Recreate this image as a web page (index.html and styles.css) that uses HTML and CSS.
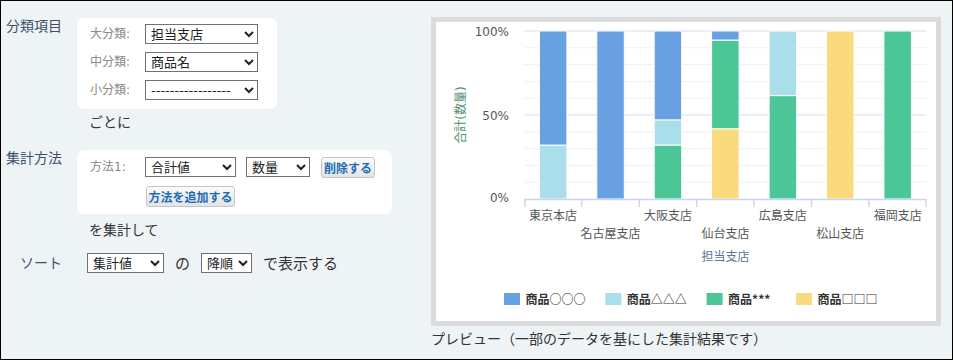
FILE: index.html
```html
<!DOCTYPE html>
<html lang="ja">
<head>
<meta charset="utf-8">
<title>集計</title>
<link rel="stylesheet" href="styles.css">
</head>
<body>
<div class="frame">
  <div class="form">
    <div class="row">
      <div class="label">分類項目</div>
      <div class="content">
        <div class="panel panel-class">
          <div class="field"><span class="flabel">大分類:</span><select class="sel sel-class"><option>担当支店</option></select></div>
          <div class="field"><span class="flabel">中分類:</span><select class="sel sel-class"><option>商品名</option></select></div>
          <div class="field"><span class="flabel">小分類:</span><select class="sel sel-class"><option>-----------------</option></select></div>
        </div>
        <div class="after after-class">ごとに</div>
      </div>
    </div>
    <div class="row row-method">
      <div class="label">集計方法</div>
      <div class="content">
        <div class="panel panel-method">
          <div class="field">
            <span class="flabel">方法1:</span>
            <select class="sel sel-func"><option>合計値</option></select>
            <select class="sel sel-target"><option>数量</option></select>
            <button class="btn btn-del" type="button">削除する</button>
          </div>
          <div class="field field-add">
            <button class="btn btn-add" type="button">方法を追加する</button>
          </div>
        </div>
        <div class="after after-method">を集計して</div>
      </div>
    </div>
    <div class="row row-sort">
      <div class="label label-sort">ソート</div>
      <div class="content sort-line">
        <select class="sel sel-sort"><option>集計値</option></select>
        <span class="word">の</span>
        <select class="sel sel-order"><option>降順</option></select>
        <span class="word">で表示する</span>
      </div>
    </div>
  </div>

  <div class="chartcol">
    <div class="chartbox">
      <svg class="chart" width="500" height="299" viewBox="0 0 500 299" xmlns="http://www.w3.org/2000/svg">
        <g class="grid" stroke="#f0f0f0" stroke-width="1">
          <line x1="88.4" x2="490.4" y1="25.8" y2="25.8"/>
          <line x1="88.4" x2="490.4" y1="42.6" y2="42.6"/>
          <line x1="88.4" x2="490.4" y1="59.4" y2="59.4"/>
          <line x1="88.4" x2="490.4" y1="76.2" y2="76.2"/>
          <line x1="88.4" x2="490.4" y1="109.8" y2="109.8"/>
          <line x1="88.4" x2="490.4" y1="126.6" y2="126.6"/>
          <line x1="88.4" x2="490.4" y1="143.4" y2="143.4"/>
          <line x1="88.4" x2="490.4" y1="160.2" y2="160.2"/>
        </g>
        <g stroke="#e4e9f1" stroke-width="1.5">
          <line x1="88.4" x2="490.4" y1="9" y2="9"/>
          <line x1="88.4" x2="490.4" y1="93" y2="93"/>
        </g>
        <g stroke="#fff" stroke-width="1">
          <rect x="103.4" y="9" width="27.5" height="114.24" fill="#68a0e1"/>
          <rect x="103.4" y="123.24" width="27.5" height="53.76" fill="#aadeea"/>

          <rect x="160.8" y="9" width="27.5" height="168" fill="#68a0e1"/>

          <rect x="218.2" y="9" width="27.5" height="89.04" fill="#68a0e1"/>
          <rect x="218.2" y="98.04" width="27.5" height="25.2" fill="#aadeea"/>
          <rect x="218.2" y="123.24" width="27.5" height="53.76" fill="#4cc597"/>

          <rect x="275.6" y="9" width="27.5" height="9.24" fill="#68a0e1"/>
          <rect x="275.6" y="18.24" width="27.5" height="88.7" fill="#4cc597"/>
          <rect x="275.6" y="106.94" width="27.5" height="70.06" fill="#f9da7c"/>

          <rect x="333.1" y="9" width="27.5" height="64.68" fill="#aadeea"/>
          <rect x="333.1" y="73.68" width="27.5" height="103.32" fill="#4cc597"/>

          <rect x="390.5" y="9" width="27.5" height="168" fill="#f9da7c"/>

          <rect x="447.9" y="9" width="27.5" height="168" fill="#4cc597"/>
        </g>
        <g stroke="#ccd6eb" stroke-width="1.5">
          <line x1="88.4" x2="490.4" y1="177.5" y2="177.5"/>
          <line x1="88.9" x2="88.9" y1="177" y2="185"/>
          <line x1="145.8" x2="145.8" y1="177" y2="185"/>
          <line x1="203.3" x2="203.3" y1="177" y2="185"/>
          <line x1="260.7" x2="260.7" y1="177" y2="185"/>
          <line x1="318.1" x2="318.1" y1="177" y2="185"/>
          <line x1="375.6" x2="375.6" y1="177" y2="185"/>
          <line x1="433.0" x2="433.0" y1="177" y2="185"/>
          <line x1="489.9" x2="489.9" y1="177" y2="185"/>
        </g>
        <g class="ylab" text-anchor="end">
          <text x="73" y="14.4">100%</text>
          <text x="73" y="98">50%</text>
          <text x="73" y="180.4">0%</text>
        </g>
        <text class="ytitle" transform="translate(25 93) rotate(-90)" text-anchor="middle" dominant-baseline="central">合計(数量)</text>
        <g class="xlab" text-anchor="middle">
          <text x="117.1" y="197.5">東京本店</text>
          <text x="174.5" y="216">名古屋支店</text>
          <text x="232.0" y="197.5">大阪支店</text>
          <text x="289.4" y="216">仙台支店</text>
          <text x="346.8" y="197.5">広島支店</text>
          <text x="404.2" y="216">松山支店</text>
          <text x="461.7" y="197.5">福岡支店</text>
        </g>
        <text class="xtitle" x="289.4" y="238.5" text-anchor="middle">担当支店</text>
        <g class="legend">
          <rect x="68" y="271" width="16" height="12" fill="#68a0e1"/>
          <text x="89.5" y="281.5">商品○○○</text>
          <rect x="169.3" y="271" width="16" height="12" fill="#aadeea"/>
          <text x="190.8" y="281.5">商品△△△</text>
          <rect x="270.6" y="271" width="16" height="12" fill="#4cc597"/>
          <text x="292.1" y="281.5">商品***</text>
          <rect x="360" y="271" width="16" height="12" fill="#f9da7c"/>
          <text x="381.5" y="281.5">商品□□□</text>
        </g>
      </svg>
    </div>
    <div class="caption">プレビュー（一部のデータを基にした集計結果です）</div>
  </div>
</div>
</body>
</html>
```

FILE: styles.css
```css
html, body {
  margin: 0;
  padding: 0;
}

body {
  font-family: "DejaVu Sans", "Noto Sans CJK JP", sans-serif;
  color: #333;
  background: #eef3f6;
}

.frame {
  box-sizing: border-box;
  width: 953px;
  height: 360px;
  border: 1px solid #000;
  background: #eef3f6;
  display: flex;
  align-items: flex-start;
}

.form {
  width: 430px;
  flex: none;
  padding-top: 17px;
  display: flex;
  flex-direction: column;
}

.row {
  display: flex;
  align-items: flex-start;
}

.row-method {
  margin-top: 19px;
}

.row-sort {
  margin-top: 14px;
}

.label {
  width: 71px;
  padding-left: 5px;
  flex: none;
  font-size: 14px;
  line-height: 18px;
  margin-top: -2px;
  color: #3d5068;
  font-family: "Noto Sans CJK JP", sans-serif;
}

.label-sort {
  width: 57px;
  padding-left: 19px;
  margin-top: 0;
  color: #3d5068;
}

.content {
  display: flex;
  flex-direction: column;
  align-items: flex-start;
}

.panel {
  background: #fff;
  border-radius: 7px;
  display: flex;
  flex-direction: column;
  gap: 8px;
}

.panel-class {
  width: 168px;
  padding: 6px 19px 9px 13px;
}

.panel-method {
  width: 286px;
  padding: 7px 16px 7px 13px;
}

.field {
  display: flex;
  align-items: flex-start;
  height: 21px;
}

.panel-class .field {
  height: 20px;
}

.flabel {
  width: 55px;
  flex: none;
  font-size: 12px;
  line-height: 20px;
  color: #888;
}

.sel {
  box-sizing: border-box;
  height: 20px;
  margin: 0;
  padding: 0 0 0 1px;
  font-family: "DejaVu Sans", "Noto Sans CJK JP", sans-serif;
  font-size: 13px;
  color: #222;
  background-color: #fff;
  border: 1px solid #707070;
  border-radius: 0;
  flex: none;
}

.sel-class {
  width: 113px;
}

.sel-func {
  width: 91px;
}

.sel-target {
  width: 64px;
  margin-left: 10px;
}

.btn {
  box-sizing: border-box;
  height: 21px;
  margin: 0;
  padding: 0;
  font-family: "Noto Sans CJK JP", sans-serif;
  font-size: 12px;
  font-weight: bold;
  line-height: 19px;
  color: #1d6cb4;
  background: linear-gradient(#fbfbfb, #e4e4e4);
  border: 1px solid #c6c6c6;
  border-radius: 3px;
  flex: none;
}

.btn-del {
  width: 54px;
  margin-left: 11px;
}

.field-add {
  padding-left: 56px;
}

.btn-add {
  width: 89px;
}

.after {
  margin-left: 12px;
  font-size: 14px;
  line-height: 20px;
  color: #333;
  font-family: "Noto Sans CJK JP", sans-serif;
}

.after-class {
  margin-top: 2px;
}

.after-method {
  margin-top: 5px;
}

.sort-line {
  flex-direction: row;
  align-items: center;
  margin-left: 10px;
}

.sel-sort {
  width: 77px;
}

.sel-order {
  width: 51px;
}

.word {
  font-family: "Noto Sans CJK JP", sans-serif;
  font-size: 15px;
  line-height: 20px;
  color: #333;
  margin: 0 11px;
}

.chartcol {
  padding-top: 16px;
  display: flex;
  flex-direction: column;
}

.chartbox {
  width: 500px;
  height: 299px;
  border: 5px solid #dcdcdc;
  background: #fff;
}

.chart {
  display: block;
  font-family: "DejaVu Sans", "Noto Sans CJK JP", sans-serif;
}

.ylab text {
  font-size: 12px;
  fill: #555;
}

.xlab text {
  font-size: 12px;
  fill: #555;
  font-family: "Noto Sans CJK JP", sans-serif;
}

.xtitle {
  font-size: 12px;
  fill: #5c7398;
  font-family: "Noto Sans CJK JP", sans-serif;
}

.ytitle {
  font-size: 12px;
  fill: #4f9070;
}

.legend text {
  font-size: 12px;
  font-weight: bold;
  fill: #333;
  font-family: "Noto Sans CJK JP", sans-serif;
}

.caption {
  margin-top: 2px;
  font-family: "Noto Sans CJK JP", sans-serif;
  font-size: 14px;
  line-height: 20px;
  color: #333;
}
```
